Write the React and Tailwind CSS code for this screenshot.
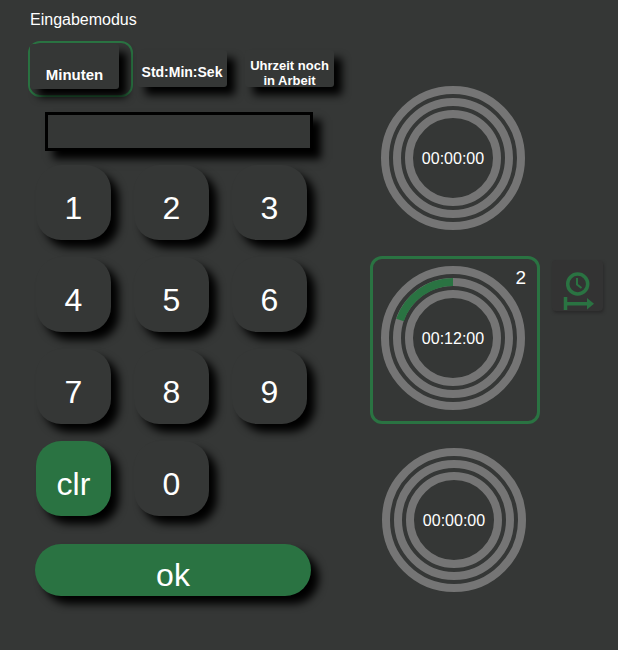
import { useState } from "react";

const digits = ["1", "2", "3", "4", "5", "6", "7", "8", "9"];

function Key({ label, green }) {
  return (
    <button
      className={`flex h-[75px] w-[75px] items-center justify-center rounded-[25px] pt-[10px] text-[32px] text-white shadow-[8px_8px_8px_#000] ${
        green ? "bg-[#2a7342]" : "bg-[#353736]"
      }`}
    >
      {label}
    </button>
  );
}

function ModeButton({ children, className }) {
  return (
    <button
      className={`rounded-[3px] bg-[#353736] font-bold text-white shadow-[8px_8px_8px_#000] ${className}`}
    >
      {children}
    </button>
  );
}

function Ring({ time, progress }) {
  const radii = [68, 56, 44];
  return (
    <div className="relative h-[144px] w-[144px]">
      <svg viewBox="0 0 144 144" className="h-full w-full">
        {radii.map((r) => (
          <circle key={r} cx="72" cy="72" r={r} fill="none" stroke="#757575" strokeWidth="8" />
        ))}
        {progress && (
          <path d="M72 16 A56 56 0 0 0 19 54" fill="none" stroke="#2a7342" strokeWidth="8" />
        )}
      </svg>
      <div className="absolute inset-0 flex items-center justify-center pt-[2px] text-[16px] text-white">{time}</div>
    </div>
  );
}

export default function App() {
  const [time] = useState("00:12:00");

  return (
    <div className="flex h-[650px] w-[618px] overflow-hidden bg-[#353736] font-['Liberation_Sans',Arial,sans-serif]">
      <div className="w-[370px] shrink-0 pt-[11px] pl-[30px]">
        <div className="text-[16px] leading-[18px] text-white">Eingabemodus</div>

        <div className="mt-[12px] -ml-[2px] flex items-start">
          <div className="h-[56px] w-[105px] rounded-[12px] border-2 border-[#2a7342]">
            <ModeButton className="mt-[1px] h-[45px] w-[89px] pt-[16px] text-[15px] leading-[17px]">Minuten</ModeButton>
          </div>
          <ModeButton className="mt-[9px] ml-[4px] h-[37px] w-[90px] pt-[7px] text-[14px] leading-[16px]">
            Std:Min:Sek
          </ModeButton>
          <ModeButton className="mt-[9px] ml-[18px] h-[37px] w-[89px] pt-[8px] text-[13px] leading-[15px]">
            Uhrzeit noch
            <br />
            in Arbeit
          </ModeButton>
        </div>

        <div className="mt-[15px] ml-[15px] h-[39px] w-[268px] border-[3px] border-black bg-[#353736] shadow-[8px_8px_8px_#000]" />

        <div className="mt-[14px] ml-[6px] grid w-[271px] grid-cols-[repeat(3,75px)] gap-x-[23px] gap-y-[17px]">
          {digits.map((d) => (
            <Key key={d} label={d} />
          ))}
          <Key label="clr" green />
          <Key label="0" />
        </div>

        <button className="mt-[28px] ml-[5px] h-[52px] w-[276px] rounded-[26px] bg-[#2a7342] pt-[10px] text-[32px] leading-[36px] text-white shadow-[8px_8px_8px_#000]">
          ok
        </button>
      </div>

      <div className="pt-[86px] pl-[11px]">
        <Ring time="00:00:00" />

        <div className="relative mt-[26px] -ml-[11px] flex h-[168px] w-[170px] items-center rounded-[12px] border-[3px] border-[#2a7342] pb-[4px] pl-[8px]">
          <Ring time={time} progress />
          <span className="absolute top-[8px] right-[11px] text-[19px] leading-[22px] text-white">2</span>
          <button className="absolute top-[1px] left-[179px] h-[51px] w-[51px] rounded-[4px] bg-[#333333] shadow-[1px_2px_3px_#2a2a2a]">
            <svg viewBox="0 0 51 51" className="h-[51px] w-[51px]" fill="none" stroke="#2a7342">
              <circle cx="25.7" cy="24" r="10" strokeWidth="3.5" />
              <path d="M25 18V24.5L29.5 28" strokeWidth="2" />
              <path d="M13.5 37V50M13.5 43.7H36" strokeWidth="3.5" />
              <path d="M35 38L42 43.7L35 49.5Z" fill="#2a7342" stroke="none" />
            </svg>
          </button>
        </div>

        <div className="mt-[24px] ml-[1px]">
          <Ring time="00:00:00" />
        </div>
      </div>
    </div>
  );
}
